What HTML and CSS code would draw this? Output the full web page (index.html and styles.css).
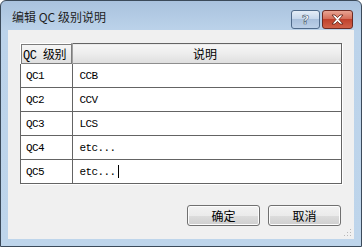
FILE: index.html
```html
<!DOCTYPE html>
<html lang="zh-CN">
<head>
  <meta charset="UTF-8" />
  <title>编辑 QC 级别说明</title>
  <link rel="stylesheet" href="styles.css">
</head>
<body>

<div class="window">
  <div class="titlebar">
    <span class="title">编辑 QC 级别说明</span>
    <div class="caption-btns">
      <span class="cap-btn help-btn">?</span>
      <span class="cap-btn close-btn">
        <svg width="13" height="11" viewBox="0 0 13 11">
          <path d="M1 1h3l2.5 2.6L9 1h3L8 5.5 12 10H9L6.5 7.4 4 10H1l4-4.5z" fill="#fff" stroke="#5a1e14" stroke-width="0.8" stroke-linejoin="round"/>
        </svg>
      </span>
    </div>
  </div>

  <div class="client">
    <table class="grid">
      <thead>
        <tr>
          <th class="col-level">QC 级别</th>
          <th class="col-desc">说明</th>
        </tr>
      </thead>
      <tbody>
        <tr><td>QC1</td><td>CCB</td></tr>
        <tr><td>QC2</td><td>CCV</td></tr>
        <tr><td>QC3</td><td>LCS</td></tr>
        <tr><td>QC4</td><td>etc...</td></tr>
        <tr><td>QC5</td><td>etc...<span class="caret"></span></td></tr>
      </tbody>
    </table>

    <div class="actions">
      <button>确定</button>
      <button>取消</button>
    </div>
    <span class="grip">
      <svg width="8" height="8" viewBox="0 0 8 8" fill="#b8b8b8">
        <rect x="6" y="0" width="1" height="1"/>
        <rect x="3" y="3" width="1" height="1"/><rect x="6" y="3" width="1" height="1"/>
        <rect x="0" y="6" width="1" height="1"/><rect x="3" y="6" width="1" height="1"/><rect x="6" y="6" width="1" height="1"/>
      </svg>
    </span>
  </div>
</div>

</body>
</html>
```

FILE: styles.css
```css
body { margin: 0; background: #fff; font-family: "Noto Sans CJK SC", "DejaVu Sans", sans-serif; }

.window { width: 346px; height: 238px; padding: 0 7px 7px 7px; border: 1px solid #3b4a5a; border-radius: 6px 6px 0 0;
  background: linear-gradient(to bottom, #a9c2de 0px, #bcd3ea 30px, #bed5eb 100%); position: relative; }

.titlebar { height: 29px; display: flex; align-items: flex-start; }
.title { font-size: 12px; color: #1e1e1e; margin: 8px 0 0 4px; line-height: 16px; }

.caption-btns { margin-left: auto; margin-top: 9px; margin-right: 1px; display: flex; gap: 2px; }
.cap-btn { height: 17px; border: 1px solid #4f6a8a; border-radius: 3px; display: flex; align-items: center; justify-content: center; }
.help-btn { width: 27px; background: linear-gradient(to bottom, #e4edf7 0%, #c7d8ec 45%, #a9c0dc 50%, #bcd0e8 100%);
  font-family: "DejaVu Sans", sans-serif; font-size: 13px; font-weight: bold; color: #fff; -webkit-text-stroke: 0.6px #46586e; line-height: 17px; }
.close-btn { width: 29px; border-color: #6d2a22; background: linear-gradient(to bottom, #e8a493 0%, #d56f5a 45%, #c0412c 50%, #d0614a 100%); }

.client { height: 209px; background: #f0f0f0; position: relative; }

.grid { position: relative; top: 13px; margin-left: 12px; width: 322px; border-collapse: collapse; border: 1px solid #646464;
  box-shadow: 1px 1px 0 #fff; background: #fff; font-size: 12px; }
.grid th { height: 19px; padding: 0; font-weight: normal; color: #000; border-bottom: 1px solid #8e8e8e;
  background: linear-gradient(to bottom, #f6f6f6 0%, #ececec 50%, #dedede 100%); }
.grid th.col-level { width: 48px; text-align: left; padding-left: 2px; border: 1px solid #fff; border-right: 2px solid #a0a0a0;
  outline: 1px solid #7c7c7c; outline-offset: -1px; font-family: "Liberation Mono", "Noto Sans CJK SC", monospace; font-size: 12px; letter-spacing: -0.5px; }
.grid th.col-desc { text-align: center; padding-right: 4px; }
.grid td { height: 23px; padding: 0 0 0 6px; border-top: 1px solid #646464; border-left: 1px solid #646464;
  font-family: "Liberation Mono", monospace; font-size: 11px; letter-spacing: -0.6px; color: #000; }
.grid td:first-child { border-left: none; padding-left: 5px; }
.grid td:last-child { padding-left: 7px; }

.caret { display: inline-block; width: 1px; height: 13px; background: #000; vertical-align: -3px; margin-left: 2px; }

.actions { position: absolute; right: 13px; top: 175px; display: flex; gap: 8px; }
.actions button { width: 73px; height: 21px; padding: 0; border: 1px solid #707070; border-radius: 3px;
  background: linear-gradient(to bottom, #f2f2f2 0%, #ebebeb 50%, #dddddd 51%, #cfcfcf 100%);
  font-family: "Noto Sans CJK SC", sans-serif; font-size: 12px; color: #000; box-shadow: inset 0 0 0 1px #fcfcfc; }

.grip { position: absolute; right: 2px; bottom: 2px; width: 8px; height: 8px; display: flex; }
```
